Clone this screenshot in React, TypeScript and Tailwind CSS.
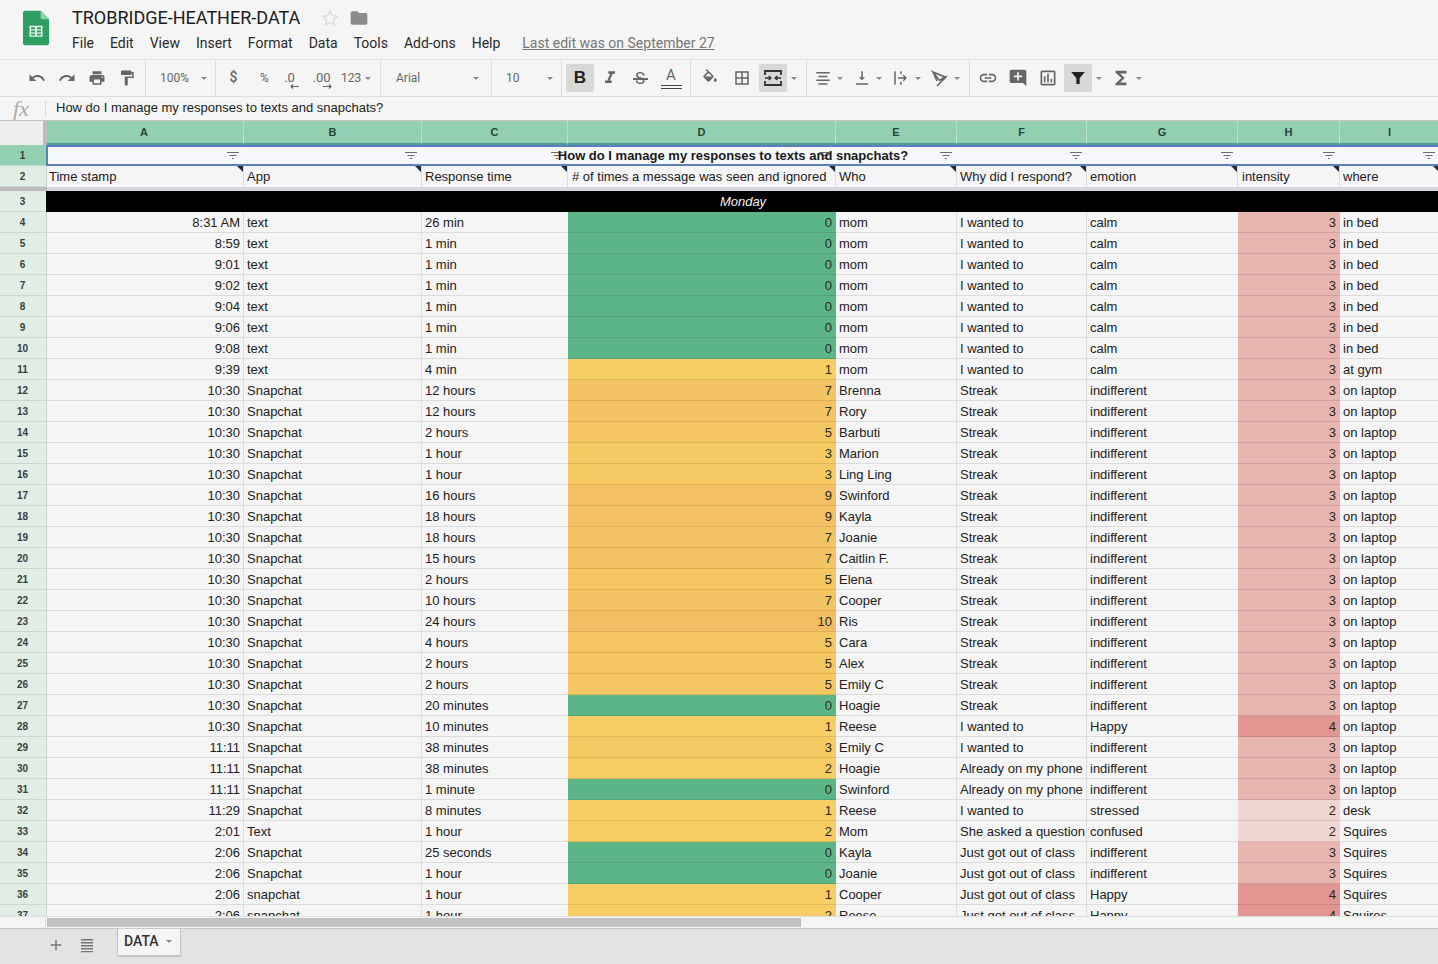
const UI = "font-['Roboto',sans-serif]";
const CELL = "font-['Liberation_Sans',Arial,sans-serif]";

const GRID = "grid w-[1440px] grid-rows-[21px] grid-cols-[47px_197px_178px_146px_268px_121px_130px_151px_102px_100px]";

const dColor: Record<number, string> = {
  0: "bg-[#5bb587]",
  1: "bg-[#f6ce63]",
  2: "bg-[#f6cc63]",
  3: "bg-[#f6cb63]",
  5: "bg-[#f5c763]",
  7: "bg-[#f4c363]",
  9: "bg-[#f3c063]",
  10: "bg-[#f3be63]",
};
const hColor: Record<number, string> = {
  2: "bg-[#f1d5d0]",
  3: "bg-[#e9b5af]",
  4: "bg-[#e39691]",
};

type Row = [string, string, string, number, string, string, string, number, string];
const W = "I wanted to";
const J = "Just got out of class";
const A = "Already on my phone";
const rows: Row[] = [
  ["8:31 AM", "text", "26 min", 0, "mom", W, "calm", 3, "in bed"],
  ["8:59", "text", "1 min", 0, "mom", W, "calm", 3, "in bed"],
  ["9:01", "text", "1 min", 0, "mom", W, "calm", 3, "in bed"],
  ["9:02", "text", "1 min", 0, "mom", W, "calm", 3, "in bed"],
  ["9:04", "text", "1 min", 0, "mom", W, "calm", 3, "in bed"],
  ["9:06", "text", "1 min", 0, "mom", W, "calm", 3, "in bed"],
  ["9:08", "text", "1 min", 0, "mom", W, "calm", 3, "in bed"],
  ["9:39", "text", "4 min", 1, "mom", W, "calm", 3, "at gym"],
  ["10:30", "Snapchat", "12 hours", 7, "Brenna", "Streak", "indifferent", 3, "on laptop"],
  ["10:30", "Snapchat", "12 hours", 7, "Rory", "Streak", "indifferent", 3, "on laptop"],
  ["10:30", "Snapchat", "2 hours", 5, "Barbuti", "Streak", "indifferent", 3, "on laptop"],
  ["10:30", "Snapchat", "1 hour", 3, "Marion", "Streak", "indifferent", 3, "on laptop"],
  ["10:30", "Snapchat", "1 hour", 3, "Ling Ling", "Streak", "indifferent", 3, "on laptop"],
  ["10:30", "Snapchat", "16 hours", 9, "Swinford", "Streak", "indifferent", 3, "on laptop"],
  ["10:30", "Snapchat", "18 hours", 9, "Kayla", "Streak", "indifferent", 3, "on laptop"],
  ["10:30", "Snapchat", "18 hours", 7, "Joanie", "Streak", "indifferent", 3, "on laptop"],
  ["10:30", "Snapchat", "15 hours", 7, "Caitlin F.", "Streak", "indifferent", 3, "on laptop"],
  ["10:30", "Snapchat", "2 hours", 5, "Elena", "Streak", "indifferent", 3, "on laptop"],
  ["10:30", "Snapchat", "10 hours", 7, "Cooper", "Streak", "indifferent", 3, "on laptop"],
  ["10:30", "Snapchat", "24 hours", 10, "Ris", "Streak", "indifferent", 3, "on laptop"],
  ["10:30", "Snapchat", "4 hours", 5, "Cara", "Streak", "indifferent", 3, "on laptop"],
  ["10:30", "Snapchat", "2 hours", 5, "Alex", "Streak", "indifferent", 3, "on laptop"],
  ["10:30", "Snapchat", "2 hours", 5, "Emily C", "Streak", "indifferent", 3, "on laptop"],
  ["10:30", "Snapchat", "20 minutes", 0, "Hoagie", "Streak", "indifferent", 3, "on laptop"],
  ["10:30", "Snapchat", "10 minutes", 1, "Reese", W, "Happy", 4, "on laptop"],
  ["11:11", "Snapchat", "38 minutes", 3, "Emily C", W, "indifferent", 3, "on laptop"],
  ["11:11", "Snapchat", "38 minutes", 2, "Hoagie", A, "indifferent", 3, "on laptop"],
  ["11:11", "Snapchat", "1 minute", 0, "Swinford", A, "indifferent", 3, "on laptop"],
  ["11:29", "Snapchat", "8 minutes", 1, "Reese", W, "stressed", 2, "desk"],
  ["2:01", "Text", "1 hour", 2, "Mom", "She asked a question", "confused", 2, "Squires"],
  ["2:06", "Snapchat", "25 seconds", 0, "Kayla", J, "indifferent", 3, "Squires"],
  ["2:06", "Snapchat", "1 hour", 0, "Joanie", J, "indifferent", 3, "Squires"],
  ["2:06", "snapchat", "1 hour", 1, "Cooper", J, "Happy", 4, "Squires"],
  ["2:06", "snapchat", "1 hour", 2, "Reese", J, "Happy", 4, "Squires"],
];

function Mi({ d, size = 18, className = "" }: { d: string; size?: number; className?: string }) {
  return (
    <svg width={size} height={size} viewBox="0 0 24 24" className={className} fill="currentColor">
      <path d={d} />
    </svg>
  );
}

function Caret({ className = "" }: { className?: string }) {
  return <span className={`block h-0 w-0 border-x-[3px] border-t-[3px] border-x-transparent border-t-[#888] ${className}`} />;
}

function Divider() {
  return <span className="mx-0 h-[36px] w-px shrink-0 bg-[#dcdcdc]" />;
}

function Btn({ children, w = "w-[30px]", active = false }: { children: React.ReactNode; w?: string; active?: boolean }) {
  return (
    <span className={`flex h-[28px] shrink-0 items-center justify-center rounded-[2px] text-[#666] ${w} ${active ? "bg-[#d8d8d8]" : ""}`}>
      {children}
    </span>
  );
}

function CaretSlot({ w = "w-[14px]" }: { w?: string }) {
  return (
    <span className={`flex h-[28px] shrink-0 items-center justify-center ${w}`}>
      <Caret />
    </span>
  );
}

function Arrow({ left }: { left: boolean }) {
  return (
    <svg width="9" height="5" viewBox="0 0 9 5" fill="none" stroke="#666" strokeWidth="1.2" className="block">
      {left ? <path d="M9 2.5H1M3 .5l-2 2 2 2" /> : <path d="M0 2.5h8M6 .5l2 2-2 2" />}
    </svg>
  );
}

function SheetsLogo() {
  return (
    <svg width="26" height="36" viewBox="0 0 28 37">
      <path d="M2 0h17l9 9v26a2 2 0 0 1-2 2H2a2 2 0 0 1-2-2V2a2 2 0 0 1 2-2z" fill="#2f9e63" />
      <path d="M19 0l9 9h-7a2 2 0 0 1-2-2z" fill="#8fd0ae" />
      <path d="M7 16h14v12H7z M8.6 17.6v2.2h4.4v-2.2z M15 17.6v2.2h4.4v-2.2z M8.6 21.2v2.2h4.4v-2.2z M15 21.2v2.2h4.4v-2.2z M8.6 24.8v1.8h4.4v-1.8z M15 24.8v1.8h4.4v-1.8z" fill="#e6f3ec" fillRule="evenodd" />
    </svg>
  );
}

function TitleBar() {
  const menus = ["File", "Edit", "View", "Insert", "Format", "Data", "Tools", "Add-ons", "Help"];
  return (
    <div className="flex h-[60px] shrink-0 border-b border-[#e2e2e2] pl-[23px]">
      <div className="mt-[10px] w-[28px]">
        <SheetsLogo />
      </div>
      <div className="ml-[21px] flex flex-col">
        <div className="mt-[6px] flex h-[24px] items-center">
          <span className="text-[18px] leading-[24px] text-[#1c1c1c]">TROBRIDGE-HEATHER-DATA</span>
          <svg width="18" height="18" viewBox="0 0 24 24" className="ml-[21px]" fill="none" stroke="#d9d9d9" strokeWidth="1.6">
            <path d="M12 2.5l2.9 6.3 6.9.8-5.1 4.7 1.4 6.8-6.1-3.4-6.1 3.4 1.4-6.8-5.1-4.7 6.9-.8z" />
          </svg>
          <Mi className="ml-[10px] text-[#8a8a8a]" size={20} d="M10 4H4c-1.1 0-2 .9-2 2v12c0 1.1.9 2 2 2h16c1.1 0 2-.9 2-2V8c0-1.1-.9-2-2-2h-8l-2-2z" />
        </div>
        <div className="mt-[3px] flex items-center gap-[16px] text-[14px] leading-[20px] text-[#2a2a2a]">
          {menus.map((m) => (
            <span key={m}>{m}</span>
          ))}
          <span className="ml-[6px] text-[#777] underline">Last edit was on September 27</span>
        </div>
      </div>
    </div>
  );
}

function Toolbar() {
  return (
    <div className="flex h-[37px] shrink-0 items-center border-b border-[#dedede] pl-[22px] text-[#666]">
      <Btn><Mi d="M12.5 8c-2.65 0-5.05.99-6.9 2.6L2 7v9h9l-3.62-3.62c1.39-1.16 3.16-1.88 5.12-1.88 3.54 0 6.55 2.31 7.6 5.5l2.37-.78C21.08 11.03 17.15 8 12.5 8z" /></Btn>
      <Btn><Mi d="M18.4 10.6C16.55 8.99 14.15 8 11.5 8c-4.65 0-8.58 3.03-9.96 7.22L3.9 16c1.05-3.19 4.05-5.5 7.6-5.5 1.95 0 3.73.72 5.12 1.88L13 16h9V7l-3.6 3.6z" /></Btn>
      <Btn><Mi d="M19 8H5c-1.66 0-3 1.34-3 3v6h4v4h12v-4h4v-6c0-1.66-1.34-3-3-3zm-3 11H8v-5h8v5zm3-7c-.55 0-1-.45-1-1s.45-1 1-1 1 .45 1 1-.45 1-1 1zm-1-9H6v4h12V3z" /></Btn>
      <Btn><Mi d="M18 4V3c0-.55-.45-1-1-1H5c-.55 0-1 .45-1 1v4c0 .55.45 1 1 1h12c.55 0 1-.45 1-1V6h1v4H9v11c0 .55.45 1 1 1h2c.55 0 1-.45 1-1v-9h8V4h-3z" /></Btn>
      <span className="w-[3px] shrink-0" />
      <Divider />
      <span className="flex w-[69px] shrink-0 items-center pl-[14px] text-[12px]">
        <span className="w-[41px]">100%</span>
        <Caret />
      </span>
      <Divider />
      <Btn w="w-[35px]"><span className="-mt-[1px] text-[14px] font-medium">$</span></Btn>
      <Btn w="w-[27px]"><span className="-mt-[1px] text-[12px]">%</span></Btn>
      <Btn w="w-[27px]">
        <span className="mt-[3px] flex flex-col items-end">
          <span className="-ml-[4px] text-[13px] leading-[13px]">.0</span>
          <span className="-mr-[4px]"><Arrow left /></span>
        </span>
      </Btn>
      <Btn w="w-[33px]">
        <span className="mt-[3px] flex flex-col items-end">
          <span className="text-[13px] leading-[13px]">.00</span>
          <span className="-mr-[1px]"><Arrow left={false} /></span>
        </span>
      </Btn>
      <span className="flex w-[42px] shrink-0 items-center pl-[3px] text-[12px]">
        <span className="w-[24px]">123</span>
        <Caret />
      </span>
      <Divider />
      <span className={`flex w-[110px] shrink-0 items-center pl-[15px] text-[12px]`}>
        <span className="w-[77px]">Arial</span>
        <Caret />
      </span>
      <Divider />
      <span className="flex w-[69px] shrink-0 items-center pl-[14px] text-[12px]">
        <span className="w-[41px]">10</span>
        <Caret />
      </span>
      <Divider />
      <span className="w-[4px] shrink-0" />
      <Btn w="w-[28px]" active><span className={`${CELL} text-[17px] font-bold text-[#222]`}>B</span></Btn>
      <span className="w-[1px] shrink-0" />
      <Btn w="w-[30px]"><Mi size={20} d="M10 4v3h2.21l-3.42 8H6v3h8v-3h-2.21l3.42-8H18V4z" /></Btn>
      <Btn w="w-[30px]">
        <span className="relative flex w-[15px] justify-center text-[17px] leading-[18px]">
          S
          <span className="absolute left-0 top-[9px] h-[2px] w-[15px] bg-[#666]" />
        </span>
      </Btn>
      <Btn w="w-[32px]">
        <span className="flex flex-col items-center">
          <span className="text-[15px] leading-[15px]">A</span>
          <span className="mt-[2px] block h-[4px] w-[21px] border-y border-[#444]" />
        </span>
      </Btn>
      <span className="w-[3px] shrink-0" />
      <Divider />
      <Btn w="w-[38px]"><Mi d="M16.56 8.94L7.62 0 6.21 1.41l2.38 2.38-5.15 5.15c-.59.59-.59 1.54 0 2.12l5.5 5.5c.29.29.68.44 1.06.44s.77-.15 1.06-.44l5.5-5.5c.59-.58.59-1.53 0-2.12zM5.21 10L10 5.21 14.79 10H5.21zM19 11.5s-2 2.17-2 3.5c0 1.1.9 2 2 2s2-.9 2-2c0-1.33-2-3.5-2-3.5z" /></Btn>
      <Btn w="w-[26px]"><Mi d="M3 3v18h18V3H3zm8 16H5v-6h6v6zm0-8H5V5h6v6zm8 8h-6v-6h6v6zm0-8h-6V5h6v6z" /></Btn>
      <span className="w-[4px] shrink-0" />
      <Btn w="w-[28px]" active>
        <svg width="18" height="18" viewBox="0 0 18 18" fill="none" stroke="#333" strokeWidth="1.8">
          <path d="M1 6V2h16v4M1 12v4h16v-4" />
          <path d="M1 9h5.5M4.8 7l2 2-2 2M17 9h-5.5M13.2 7l-2 2 2 2" strokeWidth="1.5" />
        </svg>
      </Btn>
      <CaretSlot w="w-[14px]" />
      <span className="w-[5px] shrink-0" />
      <Divider />
      <span className="w-[3px] shrink-0" />
      <Btn w="w-[26px]"><Mi d="M3 4h18v2H3zM6 9h12v2H6zM3 14h18v2H3zM6 19h12v2H6z" /></Btn>
      <CaretSlot w="w-[8px]" />
      <span className="w-[5px] shrink-0" />
      <Btn w="w-[26px]"><Mi d="M16 11h-3V3h-2v8H8l4 4 4-4zM4 19v2h16v-2H4z" /></Btn>
      <CaretSlot w="w-[8px]" />
      <span className="w-[5px] shrink-0" />
      <Btn w="w-[26px]"><Mi d="M3 3h2v18H3zM11 3h2v4h-2zM11 17h2v4h-2zM8 11h8.2l-2-2 1.4-1.4 4.4 4.4-4.4 4.4-1.4-1.4 2-2H8z" /></Btn>
      <CaretSlot w="w-[8px]" />
      <span className="w-[5px] shrink-0" />
      <Btn w="w-[26px]">
        <svg width="18" height="18" viewBox="0 0 18 18" fill="none" stroke="#666" strokeWidth="1.6">
          <path d="M2 3l12 5-5.5 3.5zM2 3l4 9M6 17l10-10" />
        </svg>
      </Btn>
      <CaretSlot w="w-[8px]" />
      <span className="w-[8px] shrink-0" />
      <Divider />
      <span className="w-[3px] shrink-0" />
      <Btn w="w-[30px]"><Mi size={20} d="M3.9 12c0-1.71 1.39-3.1 3.1-3.1h4V7H7c-2.76 0-5 2.24-5 5s2.24 5 5 5h4v-1.9H7c-1.71 0-3.1-1.39-3.1-3.1zM8 13h8v-2H8v2zm9-6h-4v1.9h4c1.71 0 3.1 1.39 3.1 3.1s-1.39 3.1-3.1 3.1h-4V17h4c2.76 0 5-2.24 5-5s-2.24-5-5-5z" /></Btn>
      <Btn w="w-[30px]"><Mi size={20} d="M21.99 4c0-1.1-.89-2-1.99-2H4c-1.1 0-2 .9-2 2v12c0 1.1.9 2 2 2h14l4 4-.01-18zM17 11h-4v4h-2v-4H7V9h4V5h2v4h4v2z" /></Btn>
      <Btn w="w-[30px]"><Mi size={20} d="M19 3H5c-1.1 0-2 .9-2 2v14c0 1.1.9 2 2 2h14c1.1 0 2-.9 2-2V5c0-1.1-.9-2-2-2zm0 16H5V5h14v14zM7 10h2v7H7zm4-3h2v10h-2zm4 6h2v4h-2z" /></Btn>
      <span className="w-[1px] shrink-0" />
      <Btn w="w-[28px]" active><Mi className="text-[#222]" d="M3 4h18l-6.8 8.4V20h-4.4v-7.6z" /></Btn>
      <CaretSlot w="w-[14px]" />
      <Btn w="w-[30px]"><Mi size={22} d="M18 4H6v2l6.5 6L6 18v2h12v-3h-7l5-5-5-5h7z" /></Btn>
      <CaretSlot w="w-[6px]" />
    </div>
  );
}

function FormulaBar() {
  return (
    <div className="flex h-[23px] shrink-0 items-center">
      <span className="flex w-[45px] items-center pl-[13px]">
        <span className="font-['Liberation_Serif',serif] text-[22px] italic leading-[20px] text-[#aaa]">fx</span>
      </span>
      <span className="h-[16px] w-px bg-[#dcdcdc]" />
      <span className={`-mt-[2px] pl-[10px] text-[13px] text-[#222] ${CELL}`}>How do I manage my responses to texts and snapchats?</span>
    </div>
  );
}

function FilterIcon() {
  return (
    <svg width="14" height="10" viewBox="0 0 14 10" fill="none" stroke="#6b6b6b" strokeWidth="1">
      <path d="M1 1.5h12M3.5 4.5h7M6 7.5h2" />
    </svg>
  );
}

function ColumnHeaders() {
  const cols = ["A", "B", "C", "D", "E", "F", "G", "H", "I"];
  return (
    <div className={`grid w-[1440px] grid-cols-[47px_197px_178px_146px_268px_121px_130px_151px_102px_100px] h-[25px] shrink-0 border-t border-[#c4c4c4] ${CELL}`}>
      <div className="h-full border-r-[4px] border-[#bdbdbd] bg-[#eeeeee]" />
      {cols.map((c) => (
        <div key={c} className={`flex items-center justify-center border-r border-b-[2px] border-r-[#b5e0ca] border-b-[#4e9a96] bg-[#93d0b1] text-[11px] font-bold text-[#24483a] ${c === "A" ? "pr-[2px]" : ""}`}>
          {c}
        </div>
      ))}
    </div>
  );
}

function RowHead({ n, active = false, shift = false }: { n: number; active?: boolean; shift?: boolean }) {
  return (
    <div className={`flex items-center justify-center border-r border-b border-[#c9d9d0] pr-[1px] text-[10px] font-bold text-[#3c3c3c] ${shift ? "pt-[1px]" : ""} ${active ? "bg-[#93d0b1]" : "bg-[#e0eee6]"}`}>
      {n}
    </div>
  );
}

function FilterRow() {
  return (
    <div className={`${GRID} relative h-[21px]`}>
      <RowHead n={1} active />
      {[...Array(9)].map((_, i) => (
        <div key={i} className="flex items-center justify-end border-y-2 border-y-[#5a80bd] bg-[#f5f7fa] pr-[4px]">
          <FilterIcon />
        </div>
      ))}
      <span className="absolute left-[46px] top-0 w-[1374px] text-center text-[13px] font-bold leading-[21px] text-[#1a1a1a]">
        How do I manage my responses to texts and snapchats?
      </span>
      <span className="absolute left-[46px] top-0 h-[21px] w-[2px] bg-[#5a80bd]" />
    </div>
  );
}

function HeaderRow() {
  const labels = ["Time stamp", "App", "Response time", "# of times a message was seen and ignored", "Who", "Why did I respond?", "emotion", "intensity", "where"];
  const pads: Record<string, string> = {
    "Time stamp": "pl-[2px]",
    "# of times a message was seen and ignored": "pl-[4px]",
    intensity: "pl-[4px]",
  };
  return (
    <div className={`${GRID} h-[21px]`}>
      <RowHead n={2} />
      {labels.map((l) => (
        <div key={l} className={`relative overflow-hidden whitespace-nowrap border-r border-[#dcdcdc] text-[13px] leading-[21px] text-[#222] ${pads[l] ?? "pl-[3px]"}`}>
          {l}
          <span className="absolute right-0 top-0 h-0 w-0 border-l-[6px] border-t-[6px] border-l-transparent border-t-[#1f2a3c]" />
        </div>
      ))}
    </div>
  );
}

function FrozenBand() {
  return (
    <div className="flex h-[4px] w-[1440px]">
      <div className="h-full w-[47px] bg-[#bdbdbd]" />
      <div className="h-full flex-1 bg-[#d5d6dd]" />
    </div>
  );
}

function DayRow() {
  return (
    <div className={`${GRID} h-[21px]`}>
      <RowHead n={3} />
      <div className="col-span-9 -ml-[1px] bg-black text-center text-[13px] italic leading-[21px] text-[#f2f2f2]">Monday</div>
    </div>
  );
}

function TextCell({ children, noLine = false }: { children: React.ReactNode; noLine?: boolean }) {
  return <div className={`overflow-hidden whitespace-nowrap border-b border-[#dcdcdc] pl-[3px] pt-[1px] text-[13px] leading-[20px] text-[#222] ${noLine ? "" : "border-r"}`}>{children}</div>;
}

function DataRow({ n, r }: { n: number; r: Row }) {
  return (
    <div className={`${GRID} h-[21px]`}>
      <RowHead n={n} shift />
      <div className="overflow-hidden border-r border-b border-[#dcdcdc] pr-[3px] pt-[1px] text-right text-[13px] leading-[20px] text-[#222]">{r[0]}</div>
      <TextCell>{r[1]}</TextCell>
      <TextCell noLine>{r[2]}</TextCell>
      <div className={`overflow-hidden border-b border-black/10 pr-[4px] pt-[1px] text-right text-[13px] leading-[20px] text-[#2a2a1c] ${dColor[r[3]]}`}>{r[3]}</div>
      <TextCell>{r[4]}</TextCell>
      <TextCell>{r[5]}</TextCell>
      <TextCell noLine>{r[6]}</TextCell>
      <div className={`overflow-hidden border-b border-black/10 pr-[4px] pt-[1px] text-right text-[13px] leading-[20px] text-[#2e1f1f] ${hColor[r[7]]}`}>{r[7]}</div>
      <TextCell>{r[8]}</TextCell>
      <TextCell>{""}</TextCell>
    </div>
  );
}

function Scrollbar() {
  return (
    <div className="flex h-[12px] shrink-0 border-t border-[#e0e0e0]">
      <div className="h-full w-[46px] border-r border-[#dcdcdc]" />
      <div className="flex-1 pt-[1px] pl-[1px]">
        <div className="h-[9px] w-[754px] bg-[#c1c1c1]" />
      </div>
    </div>
  );
}

function TabBar() {
  return (
    <div className="flex h-[36px] shrink-0 border-t border-[#c8c8c8] bg-[#e3e3e3]">
      <span className="flex h-[32px] w-[72px] items-center justify-end text-[#777]">
        <Mi size={18} className="mr-[7px]" d="M19 13h-6v6h-2v-6H5v-2h6V5h2v6h6v2z" />
      </span>
      <span className="flex h-[32px] w-[30px] items-center justify-center text-[#777]">
        <Mi size={18} d="M4 4h16v2H4zM4 8h16v2H4zM4 12h16v2H4zM4 16h16v2H4zM4 20h16v1.6H4z" />
      </span>
      <div className="ml-[15px] flex h-[27px] w-[64px] items-center rounded-b-[2px] border-x border-b border-[#c4c4c4] bg-[#f5f5f5] pb-[2px] pl-[6px] shadow-[0_1px_1px_rgba(0,0,0,0.15)]">
        <span className="text-[14px] font-medium text-[#333]">DATA</span>
        <Caret className="ml-[7px]" />
      </div>
    </div>
  );
}

export default function App() {
  return (
    <div className={`flex h-[964px] w-[1438px] flex-col overflow-hidden bg-[#f5f5f5] ${UI}`}>
      <TitleBar />
      <Toolbar />
      <FormulaBar />
      <div className={`flex min-h-0 flex-1 flex-col overflow-hidden ${CELL}`}>
        <ColumnHeaders />
        <FilterRow />
        <HeaderRow />
        <FrozenBand />
        <DayRow />
        <div className="min-h-0 flex-1 overflow-hidden">
          {rows.map((r, i) => (
            <DataRow key={i} n={i + 4} r={r} />
          ))}
        </div>
      </div>
      <Scrollbar />
      <TabBar />
    </div>
  );
}
